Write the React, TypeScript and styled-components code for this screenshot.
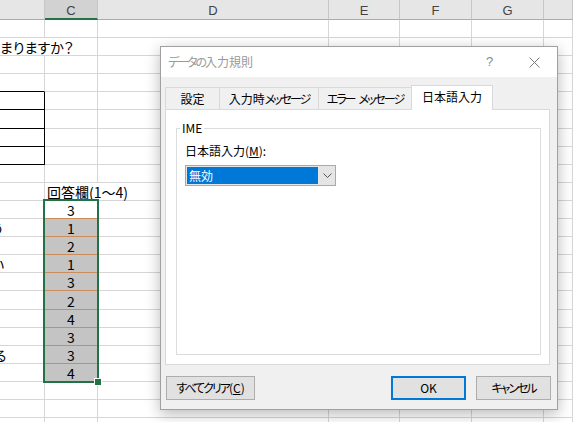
import React from "react";
import styled, { createGlobalStyle, css } from "styled-components";

const GRID = "#d6d6d6";
const BLACK = "#000";
const ORANGE = "#c98c5a";
const GRAY = "#c4c4c4";
const GREEN = "#217346";
const COLS = [45, 53, 231, 71, 72, 72];
const HEADS = ["", "C", "D", "E", "F", "G", ""];

const GlobalStyle = createGlobalStyle`
  html, body {
    margin: 0;
    padding: 0;
    background: #fff;
  }
  body {
    font-family: "Noto Sans CJK JP", "Noto Sans", sans-serif;
  }
`;

type Spec = {
  text?: string;
  span?: number;
  fill?: string;
  bb?: string;
  rb?: string;
  center?: boolean;
  shift?: number;
};

// left column (B, mostly cut off) content
const colA: Record<number, Spec> = {
  2: { text: "まりますか？", span: 2, shift: 0 },
  4: { bb: BLACK },
  5: { bb: BLACK, rb: BLACK },
  6: { bb: BLACK, rb: BLACK },
  7: { bb: BLACK, rb: BLACK },
  8: { bb: BLACK, rb: BLACK },
  12: { text: "う", shift: 9 },
  14: { text: "い", shift: 9 },
  19: { text: "る", shift: 6 },
};

const answers = [3, 1, 2, 1, 3, 2, 4, 3, 3, 4];

const colC = (r: number): Spec => {
  if (r === 10) return { text: "回答欄(1～4)", span: 2 };
  if (r >= 11 && r <= 20) {
    return {
      text: String(answers[r - 11]),
      center: true,
      fill: r > 11 ? GRAY : undefined,
      bb: r < 20 ? ORANGE : undefined,
    };
  }
  return {};
};

const Screen = styled.div`
  position: relative;
  width: 573px;
  height: 422px;
  overflow: hidden;
  background: #fff;
`;

const Sheet = styled.div`
  display: grid;
  grid-template-columns: ${COLS.map((w) => w + "px").join(" ")} 1fr;
  grid-template-rows: 20px;
  grid-auto-rows: 18.1px;
  font-family: "Noto Sans CJK JP", sans-serif;
  font-size: 14px;
  font-feature-settings: "palt";
  color: #000;
`;

const HeadCell = styled.div<{ $active?: boolean }>`
  display: flex;
  justify-content: center;
  box-sizing: border-box;
  padding-top: 3px;
  background: ${({ $active }) => ($active ? "#d2d2d2" : "#e6e6e6")};
  border-right: 1px solid #c6c6c6;
  border-bottom: ${({ $active }) => ($active ? `2px solid ${GREEN}` : "1px solid #ababab")};
  font: 13px/16px "Liberation Sans", Arial, sans-serif;
  color: #444;
`;

const Cell = styled.div<{ $span?: number; $fill?: string; $bb?: string; $rb?: string; $center?: boolean }>`
  grid-column: span ${({ $span }) => $span ?? 1};
  display: flex;
  align-items: flex-end;
  justify-content: ${({ $center }) => ($center ? "center" : "flex-start")};
  box-sizing: border-box;
  min-width: 0;
  padding: 0 2px;
  background: ${({ $fill }) => $fill ?? "transparent"};
  border-right: 1px solid ${({ $rb }) => $rb ?? GRID};
  border-bottom: 1px solid ${({ $bb }) => $bb ?? GRID};
  line-height: 16px;
  white-space: nowrap;
`;

const Spill = styled.span<{ $shift: number }>`
  margin-left: ${({ $shift }) => -$shift - 2}px;
`;

const Selection = styled.div`
  position: absolute;
  left: 43px;
  top: 199px;
  width: 56px;
  height: 184px;
  box-sizing: border-box;
  border: 2px solid ${GREEN};
`;

const FillHandle = styled.div`
  position: absolute;
  right: -5px;
  bottom: -5px;
  width: 6px;
  height: 6px;
  background: ${GREEN};
  border: 1px solid #fff;
`;

/* ---------- dialog ---------- */

const Dialog = styled.div`
  position: absolute;
  left: 160px;
  top: 46px;
  width: 398px;
  height: 364px;
  box-sizing: border-box;
  display: flex;
  flex-direction: column;
  background: #f0f0f0;
  border: 1px solid #a0a0a0;
  box-shadow: 0 4px 14px rgba(0, 0, 0, 0.28);
  font: 12px/16px "Noto Sans CJK JP", sans-serif;
  font-feature-settings: "palt";
  color: #000;
`;

// UI font kana are narrower than Noto's
const Kana = styled.span`
  letter-spacing: -2px;
`;

const TitleBar = styled.div`
  height: 30px;
  display: flex;
  align-items: center;
  background: #fff;
  padding-left: 7px;
`;

const Title = styled.div`
  flex: 1;
  color: #999;
`;

const CaptionButton = styled.div`
  width: 45px;
  height: 30px;
  display: flex;
  align-items: center;
  justify-content: center;
  color: #8a8a8a;
  font: 13px/16px "Liberation Sans", Arial, sans-serif;
`;

const Body = styled.div`
  flex: 1;
  display: flex;
  flex-direction: column;
  padding: 8px 7px 9px 4px;
`;

const Tabs = styled.div`
  display: flex;
  align-items: flex-end;
  height: 24px;
  position: relative;
  z-index: 1;
`;

const Tab = styled.div<{ $w: number; $active?: boolean }>`
  width: ${({ $w }) => $w}px;
  height: 22px;
  box-sizing: border-box;
  display: flex;
  align-items: center;
  justify-content: center;
  gap: 4px;
  background: #f0f0f0;
  border: 1px solid #d9d9d9;
  border-right: none;
  border-bottom: none;
  ${({ $active }) =>
    $active &&
    css`
      height: 25px;
      margin-bottom: -1px;
      padding-bottom: 2px;
      background: #fff;
      border-right: 1px solid #d9d9d9;
    `}
`;

const Panel = styled.div`
  height: 256px;
  box-sizing: border-box;
  display: flex;
  background: #fff;
  border: 1px solid #d9d9d9;
  padding: 10px 8px 9px 10px;
`;

const Group = styled.fieldset`
  flex: 1;
  min-width: 0;
  margin: 0;
  padding: 0 8px;
  border: 1px solid #dcdcdc;
`;

const Legend = styled.legend`
  padding: 0 2px;
  margin-left: -5px;
  line-height: 16px;
`;

const FieldLabel = styled.div`
  margin-top: 7px;
`;

const Combo = styled.div`
  margin-top: 6px;
  width: 151px;
  height: 21px;
  box-sizing: border-box;
  display: flex;
  background: #e5e5e5;
  border: 1px solid #a9a9a9;
`;

const ComboValue = styled.div`
  flex: 1;
  margin: 1px;
  padding-left: 2px;
  background: #0078d7;
  color: #fff;
  line-height: 17px;
`;

const ComboArrow = styled.div`
  width: 16px;
  display: flex;
  align-items: center;
  justify-content: center;
`;

const Footer = styled.div`
  display: flex;
  margin: 11px -1px 0 0;
  padding-left: 1px;
  gap: 10px;
`;

const Button = styled.div<{ $w: number; $default?: boolean }>`
  width: ${({ $w }) => $w}px;
  height: 24px;
  box-sizing: border-box;
  display: flex;
  align-items: center;
  justify-content: center;
  background: #e1e1e1;
  border: ${({ $default }) => ($default ? "2px solid #0078d7" : "1px solid #adadad")};
`;

const Spacer = styled.div`
  flex: 1;
`;

const renderRow = (r: number) => {
  const a = colA[r] ?? {};
  const specs: Spec[] = [a];
  if (!a.span) specs.push(colC(r));
  const used = specs.reduce((n, s) => n + (s.span ?? 1), 0);
  for (let i = used; i < HEADS.length; i++) specs.push({});
  return specs.map((s, i) => (
    <Cell key={`${r}-${i}`} $span={s.span} $fill={s.fill} $bb={s.bb} $rb={s.rb} $center={s.center}>
      {s.text && (s.shift !== undefined ? <Spill $shift={s.shift}>{s.text}</Spill> : s.text)}
    </Cell>
  ));
};

export default function App() {
  const rows = Array.from({ length: 23 }, (_, i) => i + 1);
  return (
    <>
      <GlobalStyle />
      <Screen>
        <Sheet>
          {HEADS.map((h, i) => (
            <HeadCell key={`h${i}`} $active={h === "C"}>
              {h}
            </HeadCell>
          ))}
          {rows.map(renderRow)}
        </Sheet>
        <Selection>
          <FillHandle />
        </Selection>

        <Dialog>
          <TitleBar>
            <Title>
              <Kana>データの</Kana>入力規則
            </Title>
            <CaptionButton>?</CaptionButton>
            <CaptionButton>
              <svg width="11" height="11" viewBox="0 0 11 11">
                <path d="M0.5 0.5 L10.5 10.5 M10.5 0.5 L0.5 10.5" stroke="#7a7a7a" strokeWidth="1" fill="none" />
              </svg>
            </CaptionButton>
          </TitleBar>
          <Body>
            <Tabs>
              <Tab $w={54}>設定</Tab>
              <Tab $w={99}>
                <span>
                  入力時<Kana>メッセージ</Kana>
                </span>
              </Tab>
              <Tab $w={93}>
                <Kana>エラー</Kana>
                <Kana>メッセージ</Kana>
              </Tab>
              <Tab $w={82} $active>
                日本語入力
              </Tab>
            </Tabs>
            <Panel>
              <Group>
                <Legend>IME</Legend>
                <FieldLabel>
                  日本語入力(<u>M</u>):
                </FieldLabel>
                <Combo>
                  <ComboValue>無効</ComboValue>
                  <ComboArrow>
                    <svg width="9" height="5" viewBox="0 0 9 5">
                      <path d="M0.5 0.5 L4.5 4.5 L8.5 0.5" stroke="#555" strokeWidth="1" fill="none" />
                    </svg>
                  </ComboArrow>
                </Combo>
              </Group>
            </Panel>
            <Footer>
              <Button $w={89}>
                <Kana>すべてクリア</Kana>(<u>C</u>)
              </Button>
              <Spacer />
              <Button $w={75} $default>
                OK
              </Button>
              <Button $w={75}>
                <Kana>キャンセル</Kana>
              </Button>
            </Footer>
          </Body>
        </Dialog>
      </Screen>
    </>
  );
}
